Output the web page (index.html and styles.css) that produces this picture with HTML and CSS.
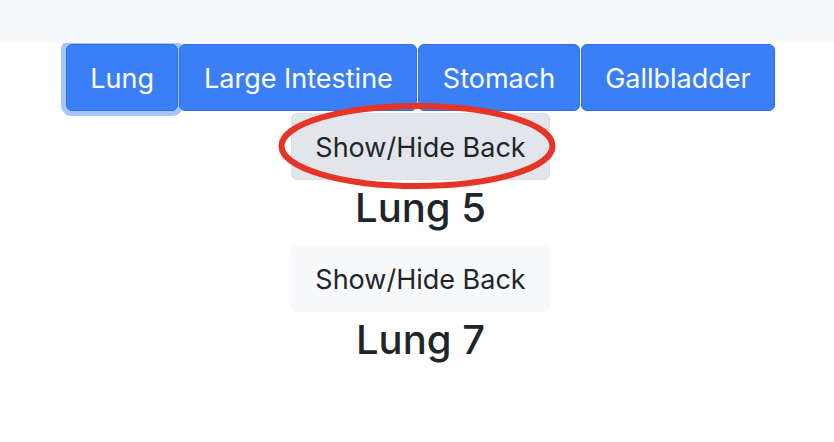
FILE: index.html
```html
<!DOCTYPE html>
<html>
<head>
<meta charset="utf-8">
<link rel="stylesheet" href="styles.css">
</head>
<body>
<div class="topbar"></div>
<main class="content">
  <div class="tabs">
    <button class="tab tab-focus">Lung</button>
    <button class="tab">Large Intestine</button>
    <button class="tab">Stomach</button>
    <button class="tab">Gallbladder</button>
  </div>
  <div class="card">
    <div class="marked">
      <button class="toggle toggle-active">Show/Hide Back</button>
      <svg class="ring" width="290" height="96" viewBox="0 0 290 96"><ellipse cx="145" cy="48" rx="135.5" ry="40" fill="none" stroke="#e63527" stroke-width="6"/></svg>
    </div>
    <h2 class="title">Lung 5</h2>
  </div>
  <div class="card">
    <button class="toggle">Show/Hide Back</button>
    <h2 class="title">Lung 7</h2>
  </div>
</main>
</body>
</html>
```
FILE: styles.css
```css
html, body {
  margin: 0;
  padding: 0;
  background: #ffffff;
  font-family: Inter, "Liberation Sans", sans-serif;
  color: #212529;
}
.topbar {
  height: 43px;
  background: #f8f9fa;
  position: relative;
  z-index: 2;
}
.content {
  display: flex;
  flex-direction: column;
  align-items: center;
  padding-left: 7px;
}
.tabs {
  display: flex;
  gap: 1px;
  margin-top: 1px;
}
.tab {
  font-family: Inter, "Liberation Sans", sans-serif;
  font-size: 27px;
  line-height: 39px;
  padding: 14px 23.5px 12px;
  border: 1px solid #2d6fe6;
  background: #3a7ff6;
  color: #ffffff;
  border-radius: 6px;
  cursor: pointer;
}
.tab-focus {
  box-shadow: 0 0 0 5px rgba(58, 127, 246, 0.45);
}
.card {
  display: flex;
  flex-direction: column;
  align-items: center;
}
.marked {
  position: relative;
  margin-top: 2px;
}
.ring {
  position: absolute;
  left: -19px;
  top: -15px;
  pointer-events: none;
}
.toggle {
  font-family: Inter, "Liberation Sans", sans-serif;
  font-size: 27px;
  line-height: 39px;
  padding: 14px 23px 12px;
  border: 1px solid #f8f9fa;
  background: #f8f9fa;
  color: #212529;
  border-radius: 6px;
}
.toggle-active {
  background: #e2e6ea;
  border-color: #dae0e5;
}
.title {
  margin: 0;
  padding: 4px 0 14px;
  font-size: 40px;
  line-height: 47px;
  font-weight: 500;
}
```
